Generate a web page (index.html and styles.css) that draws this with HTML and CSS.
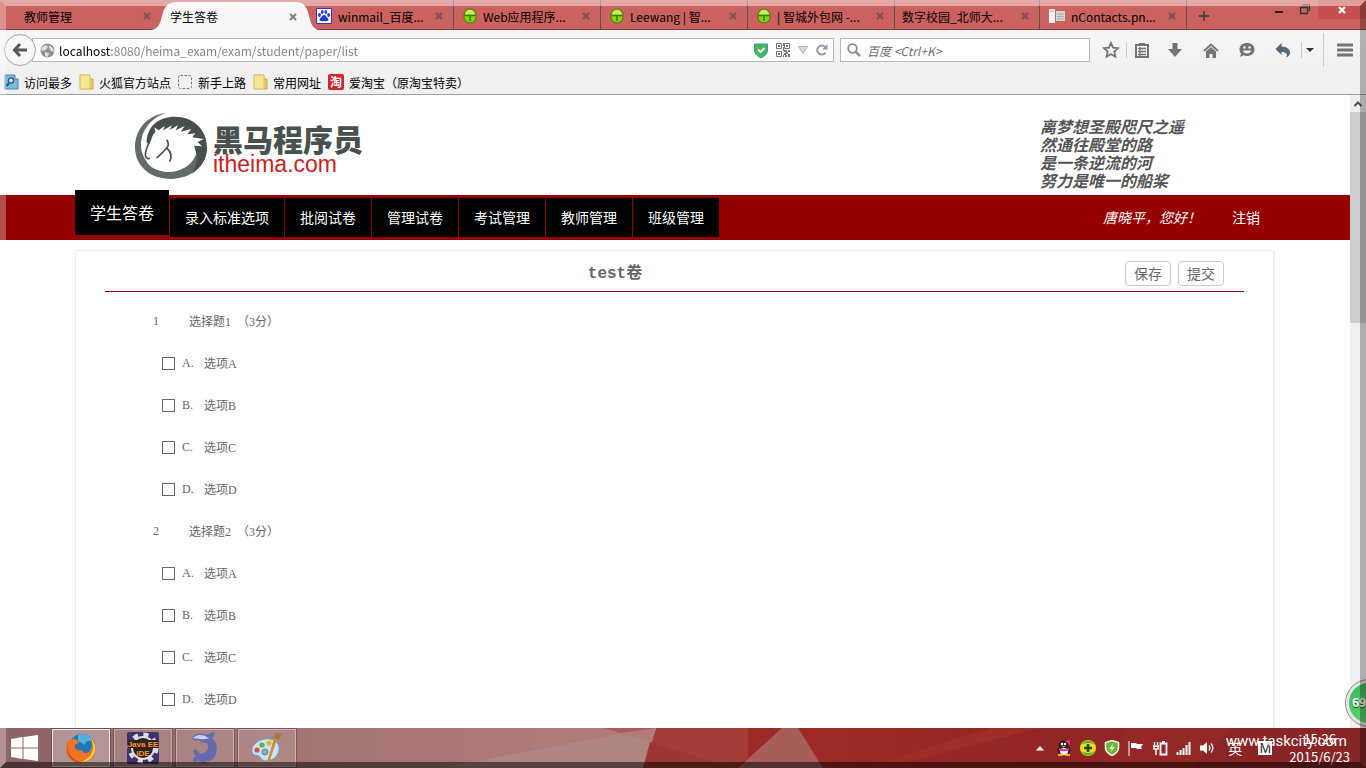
FILE: index.html
```html
<!DOCTYPE html>
<html lang="zh-CN">

<head>
    <meta charset="UTF-8">
    <meta name="viewport" content="width=device-width, initial-scale=1.0">
    <title>学生答卷</title>
    <link rel="stylesheet" href="styles.css">
</head>

<body>
    <!-- shared icons -->
    <svg class="defs" width="0" height="0">
        <symbol id="x" viewBox="0 0 8 8"><path d="M1 1l6 6M7 1L1 7" stroke="currentColor" stroke-width="2.2" /></symbol>
        <symbol id="bean" viewBox="0 0 14 16">
            <rect x="1" y="1" width="12" height="14" rx="6" fill="#86d30a" stroke="#3e7a08" />
            <path d="M2 6.500C3 0 11 0 12 6.500z" fill="#c8f05c" />
            <path d="M1.500 7.500h11M7 8v5" stroke="#3e7a08" stroke-width="1.500" />
        </symbol>
        <symbol id="folder" viewBox="0 0 15 16">
            <path d="M1 1h10v4h3v10H1z" fill="#e6c964" stroke="#cfae45" />
            <path d="M1.500 1.500h9v13h-9z" fill="#f8e694" />
        </symbol>
    </svg>

    <header class="tabs">
        <div class="tab tab-first">
            <span class="tab-title">教师管理</span>
            <button class="close" aria-label="关闭"><svg width="8" height="8"><use href="#x" /></svg></button>
        </div>
        <div class="tab active">
            <svg class="tab-shape" viewBox="0 0 168 30" preserveAspectRatio="none">
                <path d="M0 30C7 29 9 24 11 16C13 7 17 2 25 2H145C153 2 156 7 158 16C160 24 162 29 168 30z" fill="#f6f6f6" />
            </svg>
            <span class="tab-title">学生答卷</span>
            <button class="close" aria-label="关闭"><svg width="8" height="8"><use href="#x" /></svg></button>
        </div>
        <div class="tab after-active">
            <svg width="16" height="16" viewBox="0 0 16 16">
                <path d="M.5.5h15v15H.5z" fill="#fff" stroke="#2a35dc" />
                <path d="M8 7c2 0 2 2 4 3.500c1.500 2-.5 3.500-4 2.500c-3.500 1-5.500-.5-4-2.500C6 9 6 7 8 7z" fill="#2a35dc" />
                <ellipse cx="3.500" cy="7" rx="1.400" ry="1.900" fill="#2a35dc" /><ellipse cx="6.300" cy="4" rx="1.400" ry="2" fill="#2a35dc" />
                <ellipse cx="9.800" cy="4" rx="1.400" ry="2" fill="#2a35dc" /><ellipse cx="12.600" cy="7" rx="1.400" ry="1.900" fill="#2a35dc" />
            </svg>
            <span class="tab-title">winmail_百度...</span>
            <button class="close" aria-label="关闭"><svg width="8" height="8"><use href="#x" /></svg></button>
        </div>
        <div class="tab">
            <svg width="14" height="16"><use href="#bean" /></svg>
            <span class="tab-title">Web应用程序...</span>
            <button class="close" aria-label="关闭"><svg width="8" height="8"><use href="#x" /></svg></button>
        </div>
        <div class="tab">
            <svg width="14" height="16"><use href="#bean" /></svg>
            <span class="tab-title">Leewang | 智...</span>
            <button class="close" aria-label="关闭"><svg width="8" height="8"><use href="#x" /></svg></button>
        </div>
        <div class="tab">
            <svg width="14" height="16"><use href="#bean" /></svg>
            <span class="tab-title">| 智城外包网 -...</span>
            <button class="close" aria-label="关闭"><svg width="8" height="8"><use href="#x" /></svg></button>
        </div>
        <div class="tab no-icon">
            <span class="tab-title">数字校园_北师大...</span>
            <button class="close" aria-label="关闭"><svg width="8" height="8"><use href="#x" /></svg></button>
        </div>
        <div class="tab">
            <svg width="16" height="16" viewBox="0 0 16 16">
                <path d="M0 1h6v14H0z" fill="#f4f4f4" />
                <path d="M7 3h9v10H7z" fill="#d4d4d4" />
                <path d="M1 3h4M8 6h7M8 8.500h7M8 11h7" stroke="#aaa" />
            </svg>
            <span class="tab-title">nContacts.pn...</span>
            <button class="close" aria-label="关闭"><svg width="8" height="8"><use href="#x" /></svg></button>
        </div>
        <button class="new-tab" aria-label="新标签"><svg width="10" height="10" viewBox="0 0 10 10"><path d="M5 0v10M0 5h10" stroke="#444" stroke-width="1.800" /></svg></button>
        <div class="window-buttons">
            <button aria-label="最小化"><svg width="10" height="20" viewBox="0 0 10 20"><path d="M1 12h8" stroke="#222" stroke-width="2" /></svg></button>
            <button aria-label="还原"><svg width="12" height="20" viewBox="0 0 12 20"><path d="M1.500 7.500h7v6h-7zM3.500 5h7v6" fill="none" stroke="#333" stroke-width="1.300" /></svg></button>
            <button class="window-close" aria-label="关闭窗口"><svg width="8" height="8"><use href="#x" /></svg></button>
        </div>
    </header>

    <div class="toolbar">
        <button class="back" aria-label="后退">
            <svg width="16" height="16" viewBox="0 0 16 16"><path d="M8 2L2.500 8L8 14M3 8h12" fill="none" stroke="#555b60" stroke-width="3" /></svg>
        </button>
        <div class="url-bar">
            <svg width="15" height="15" viewBox="0 0 15 15">
                <circle cx="7.500" cy="7.500" r="7" fill="#8f8f8f" />
                <path d="M2 4l4-2 2 2-2 3-3 1-2-1zM9 2l4 3 1 4-3-1-2-3zM5 9l4 1-1 4-3-1z" fill="#ddd" />
            </svg>
            <input class="url" type="text" aria-label="地址" value="localhost:8080/heima_exam/exam/student/paper/list">
            <svg width="14" height="15" viewBox="0 0 14 15">
                <path d="M.5 1h13v6c0 4-3 6-6.500 8C3.500 13 .5 11 .5 7z" fill="#45b854" stroke="#2a9bb0" />
                <path d="M4 6.500l2.500 2.500L10.500 5" fill="none" stroke="#fff" stroke-width="2" />
            </svg>
            <svg width="14" height="14" viewBox="0 0 14 14">
                <path d="M.5.5h5v5h-5zM8.500.5h5v5h-5zM.5 8.500h5v5h-5z" fill="none" stroke="#6f757b" />
                <path d="M2 2h2v2H2zM10 2h2v2h-2zM2 10h2v2H2zM7 0h1v3H7zM7 4h1v4H7zM8 7h3v2H8zM12 7h2v2h-2zM10 9h2v2h-2zM8 10h2v2H8zM12 11h2v3h-2zM7 12h1v2H7zM9 12h2v2H9z" fill="#6f757b" />
            </svg>
            <svg width="10" height="8" viewBox="0 0 10 8"><path d="M.5.5h9L5 7.500z" fill="#d5dae2" stroke="#a9b1bb" /></svg>
            <svg width="12" height="12" viewBox="0 0 12 12"><path d="M9.500 8.500A4.500 4.500 0 1 1 9 3" fill="none" stroke="#8f9aa6" stroke-width="2" /><path d="M11.500 0v5.500H6z" fill="#8f9aa6" /></svg>
        </div>
        <div class="search-bar">
            <svg width="14" height="14" viewBox="0 0 14 14"><circle cx="5.500" cy="5.500" r="4.300" fill="none" stroke="#8c8c8c" stroke-width="1.800" /><path d="M8.500 8.500l4.500 4.500" stroke="#8c8c8c" stroke-width="2.400" /></svg>
            <input class="search" type="text" aria-label="搜索" placeholder="百度 &lt;Ctrl+K&gt;">
        </div>
        <div class="tools">
            <button class="tool" aria-label="收藏"><svg width="18" height="18" viewBox="0 0 18 18"><path d="M9 2l2.100 4.600 4.900.6-3.600 3.400.9 5L9 13.200l-4.300 2.400.9-5L2 7.200l4.900-.6z" fill="none" stroke="#6f757b" stroke-width="1.800" /></svg></button>
            <span class="line"></span>
            <button class="tool" aria-label="书签"><svg width="14" height="16" viewBox="0 0 14 16"><path d="M1 3h12v12H1z" fill="none" stroke="#6f757b" stroke-width="2" /><path d="M4 1h6v3H4z" fill="#6f757b" /><path d="M3 6.500h8M3 9.500h8M3 12.500h8M5 5v9" stroke="#6f757b" stroke-width="1.300" /></svg></button>
            <button class="tool wide" aria-label="下载"><svg width="14" height="14" viewBox="0 0 14 14"><path d="M4.500 0h5v6H14l-7 8-7-8h4.500z" fill="#6f757b" /></svg></button>
            <button class="tool wide" aria-label="主页"><svg width="16" height="15" viewBox="0 0 16 15"><path d="M1 8l7-6.500L15 8" fill="none" stroke="#6f757b" stroke-width="1.800" /><path d="M3 8.500L8 4l5 4.500V15H9.500v-4h-3v4H3z" fill="#6f757b" /></svg></button>
            <button class="tool wide" aria-label="聊天"><svg width="16" height="16" viewBox="0 0 16 16"><path d="M8 1c4.500 0 7.500 2.500 7.500 6.500S12 14 8 14c-1.500 0-2.500-.3-3.500-.8L1 15l1-3.500C1 10.500.5 9 .5 7.500C.5 3.500 3.500 1 8 1z" fill="#6f757b" /><path d="M4 8.500h8c-.5 4-7.500 4-8 0z" fill="#f2f2f2" /><circle cx="5.500" cy="5.500" r="1.200" fill="#f2f2f2" /><circle cx="10.500" cy="5.500" r="1.200" fill="#f2f2f2" /></svg></button>
            <button class="tool wide" aria-label="撤销"><svg width="16" height="16" viewBox="0 0 16 16"><path d="M6.500 1v3.500c6 0 8.500 3 8.500 6.500 0 2-1.500 4-4 4.500 2-3 1-5.500-4.500-5.500V13L.5 7z" fill="#56677a" /></svg></button>
            <span class="line"></span>
            <button class="tool caret" aria-label="更多"><svg width="8" height="4" viewBox="0 0 8 4"><path d="M0 0h8L4 4z" fill="#333" /></svg></button>
            <span class="line tall"></span>
            <button class="tool menu" aria-label="菜单"><svg width="16" height="14" viewBox="0 0 16 14"><path d="M1 2h14M1 7h14M1 12h14" stroke="#6f757b" stroke-width="3" stroke-linecap="round" /></svg></button>
        </div>
    </div>

    <nav class="bookmarks">
        <a href="#"><svg width="15" height="16" viewBox="0 0 15 16"><path d="M1 1h10v4h3v10H1z" fill="#7db9dd" stroke="#4a88b2" /><circle cx="7" cy="6.500" r="2.600" fill="#cfe8f7" stroke="#24577c" stroke-width="1.300" /><path d="M5 9l-2.500 3" stroke="#24577c" stroke-width="2" /></svg>访问最多</a>
        <a href="#"><svg width="15" height="16"><use href="#folder" /></svg>火狐官方站点</a>
        <a href="#"><svg width="15" height="15" viewBox="0 0 15 15"><rect x=".5" y=".5" width="13" height="13" rx="2" fill="none" stroke="#777" stroke-dasharray="2.500 1.500" /></svg>新手上路</a>
        <a href="#"><svg width="15" height="16"><use href="#folder" /></svg>常用网址</a>
        <a href="#"><span class="tao">淘</span>爱淘宝（原淘宝特卖）</a>
    </nav>

    <div class="viewport">
        <div class="page">
            <div class="banner container">
                <div class="logo">
                    <svg width="74" height="68" viewBox="12 12 222 204">
                        <path d="M108 15C48 22 15 68 15 118C15 175 62 213 122 213C180 213 231 175 231 118L203 116C200 160 165 190 115 192C65 192 33 150 33 112C33 68 62 30 108 15z" fill="#636b69" />
                        <path d="M50 105C50 55 85 26 135 26C190 26 231 65 231 118C231 155 212 180 186 197C204 170 204 140 192 118C150 150 90 140 62 110z" fill="#46504c" />
                        <path d="M62 92C66 83 72 78 76 72L73 58L86 67L104 54L100 67L126 52L119 66L144 52L137 67L164 54L152 71L184 63L172 79L196 76L187 88L221 93L203 102L216 115L193 113C201 160 155 193 108 191C72 189 48 170 46 148L60 153L48 142C48 128 59 112 62 92z" fill="#fff" />
                        <path d="M66 78C61 102 45 124 46 142C49 152 54 153 60 151M110 95C122 112 113 120 80 150M109 119C124 132 127 146 119 161" fill="none" stroke="#46504c" stroke-width="5" />
                    </svg>
                    <div class="logo-text">
                        <strong>黑马程序员</strong>
                        <span>itheima.com</span>
                    </div>
                </div>
                <p class="poem">离梦想圣殿咫尺之遥<br>然通往殿堂的路<br>是一条逆流的河<br>努力是唯一的船桨</p>
            </div>

            <div class="nav">
                <div class="container nav-inner">
                    <a class="current" href="#">学生答卷</a>
                    <a href="#">录入标准选项</a>
                    <a href="#">批阅试卷</a>
                    <a href="#">管理试卷</a>
                    <a href="#">考试管理</a>
                    <a href="#">教师管理</a>
                    <a href="#">班级管理</a>
                    <em>唐晓平，您好！</em>
                    <a class="logout" href="#">注销</a>
                </div>
            </div>

            <form class="paper container">
                <div class="paper-head">
                    <h1>test卷</h1>
                    <button type="button">保存</button>
                    <button type="submit">提交</button>
                </div>
                <div class="questions">
                    <div class="question"><span class="num">1</span>选择题1  （3分）</div>
                    <label class="option"><input type="checkbox" name="q1" value="A"><span class="letter">A.</span>选项A</label>
                    <label class="option"><input type="checkbox" name="q1" value="B"><span class="letter">B.</span>选项B</label>
                    <label class="option"><input type="checkbox" name="q1" value="C"><span class="letter">C.</span>选项C</label>
                    <label class="option"><input type="checkbox" name="q1" value="D"><span class="letter">D.</span>选项D</label>
                    <div class="question"><span class="num">2</span>选择题2  （3分）</div>
                    <label class="option"><input type="checkbox" name="q2" value="A"><span class="letter">A.</span>选项A</label>
                    <label class="option"><input type="checkbox" name="q2" value="B"><span class="letter">B.</span>选项B</label>
                    <label class="option"><input type="checkbox" name="q2" value="C"><span class="letter">C.</span>选项C</label>
                    <label class="option"><input type="checkbox" name="q2" value="D"><span class="letter">D.</span>选项D</label>
                </div>
            </form>
        </div>
        <div class="scrollbar">
            <svg width="16" height="17" viewBox="0 0 16 17"><path d="M4.500 11L8 7.500l3.500 3.500" fill="none" stroke="#505050" stroke-width="2" /></svg>
            <div class="thumb"></div>
        </div>
        <div class="speed">69</div>
    </div>

    <footer class="taskbar">
        <svg class="wallpaper" viewBox="0 0 1366 40" preserveAspectRatio="none">
            <defs>
                <linearGradient id="left"><stop offset="0" stop-color="#8e6363" /><stop offset=".5" stop-color="#a57574" /><stop offset="1" stop-color="#b07c79" /></linearGradient>
                <linearGradient id="right"><stop offset="0" stop-color="#a22c26" /><stop offset=".35" stop-color="#952624" /><stop offset="1" stop-color="#862527" /></linearGradient>
            </defs>
            <path d="M0 0h656l-13 40H0z" fill="url(#left)" />
            <path d="M440 40L620 6l30 8-7 26z" fill="#ae8582" />
            <path d="M604 0h52l-36 5z" fill="#ae5b58" />
            <path d="M656 0h92v40H643z" fill="#a33d38" />
            <path d="M650 14l83 26h-90z" fill="#9c3732" />
            <path d="M748 0h618v40H748z" fill="url(#right)" />
            <path d="M774 0h8l-44 40h-4l14-10V0z" fill="#9c2a25" />
            <path d="M782 0h16l25 40h-85z" fill="#a75e5a" />
            <path d="M990 0h50L890 38l-20 2 22-9z" fill="#a02c27" />
            <path d="M1130 0l-30 40h90L1230 0z" fill="#a02c29" opacity=".4" />
        </svg>
        <button class="start" aria-label="开始">
            <svg width="28" height="26" viewBox="0 0 28 26"><path d="M0 4l11.500-2v10.500H0zM12.500 2L27 0v12.500H12.500zM0 13.500h11.500V24L0 22zM12.500 13.500H27V26l-14.500-2z" fill="#fff" /></svg>
        </button>
        <button class="task running" aria-label="Firefox">
            <svg width="32" height="32" viewBox="0 0 32 32">
                <circle cx="17" cy="15" r="13" fill="#1f76b8" /><path d="M13 3c6-2 14 1 15 6-5-1-8 0-8 4l-7-4z" fill="#4fb4e4" />
                <path d="M3 7c0 3 1 3 1 3 2-3 5-4 7-3l3 4-4 2c-1 4 3 6 7 5 1 4 7 4 9-1 2-4 0-9-1-12 5 4 7 12 4 18-3 5-8 8-13 8C7 31 1 25 1 17c0-4 1-7 2-10z" fill="#ec7423" />
                <path d="M25 5c6 6 7 15 1 21-3 3-7 4-10 4 8-3 13-9 12-16-.3-4-1-6-3-9z" fill="#ffd53d" />
                <path d="M2 13c0 9 6 15 13 17-8 1-14-7-13-17z" fill="#cf432b" />
            </svg>
        </button>
        <button class="task" aria-label="Java EE IDE">
            <svg width="32" height="32" viewBox="0 0 32 32">
                <rect width="32" height="32" rx="2" fill="#42306a" />
                <circle cx="16" cy="16" r="13" fill="none" stroke="#ddd" stroke-width="5" stroke-dasharray="5 5.200" />
                <circle cx="16" cy="16" r="11" fill="#29221f" stroke="#ddd" stroke-width="2" />
                <path d="M1 8h30v8H1z" fill="#29221f" />
                <text class="ide" x="16" y="15" text-anchor="middle">Java EE</text>
                <text class="ide" x="16" y="24" text-anchor="middle">IDE</text>
            </svg>
        </button>
        <button class="task" aria-label="Dolphin">
            <svg width="32" height="32" viewBox="0 0 32 32">
                <path d="M3 6C6 1 12 1 17 3l8-3 1 1-3 5c7 6 6 17 0 22-3 2-6 1-8 0 2 1 3 2 3 4-5 0-6-3-8-3-3 0-4 1-6 1 0-4 1-5 3-6-2-2-3-3-2-7 4 1 5 3 6 5 6-1 10-5 7-11-4-1-7 0-6-2l-4-1C6 9 4 8 3 6z" fill="#666bb0" />
                <path d="M4 6c4-4 10-4 16 0-5 2-10 1-16 0z" fill="#ccd0f2" />
            </svg>
        </button>
        <button class="task" aria-label="画图">
            <svg width="32" height="32" viewBox="0 0 32 32">
                <path d="M14 7C6 8 0 14 1 20c1 4 5 3 7 4 3 2 2 5 7 5 8 0 14-7 13-14C27 9 21 6 14 7z" fill="#c8e4f3" stroke="#6ba6c8" />
                <circle cx="6" cy="18" r="2.600" fill="#df4d45" /><circle cx="11" cy="13" r="2.600" fill="#59b548" /><circle cx="18" cy="11" r="2.600" fill="#edb52f" /><circle cx="14" cy="20" r="3" fill="#8eaabd" stroke="#5a88a6" />
                <path d="M26 7l-8 24-2-1 7-24z" fill="#d9892e" /><path d="M22 6l2-5 8 1-5 6z" fill="#a87747" />
            </svg>
        </button>
        <div class="tray">
            <svg width="8" height="5" viewBox="0 0 8 5"><path d="M0 4.500L4 0l4 4.500z" fill="#fff" /></svg>
            <svg width="16" height="16" viewBox="0 0 16 16"><ellipse cx="8" cy="10" rx="6.500" ry="5" fill="#222" /><circle cx="7.500" cy="5" r="4.500" fill="#222" /><ellipse cx="8" cy="11.500" rx="4" ry="3.500" fill="#fff" /><path d="M3 8c3 1.500 7 1.500 10 0v2.500c-3 1-7 1-10 0z" fill="#ee2fa0" /><path d="M9 1l5-1v5z" fill="#ee2fa0" /><circle cx="6" cy="4" r="1.200" fill="#fff" /><circle cx="9" cy="4" r="1.200" fill="#fff" /><path d="M5 6h5l-2.500 1.500zM2 14h5v2H2zM9 14h5v2H9z" fill="#f2a521" /></svg>
            <svg width="16" height="16" viewBox="0 0 16 16"><circle cx="8" cy="8" r="8" fill="#f3da20" /><path d="M1 5C4-1 12-1 15 5 10 2 5 3 1 5zM1 11c4 6 11 6 14 0-5 3-10 2-14 0z" fill="#58b52b" /><path d="M8 4v8M4 8h8" stroke="#17520e" stroke-width="2.500" /></svg>
            <svg width="16" height="16" viewBox="0 0 16 16"><path d="M8 .5l6.500 2v5c0 4-3 6.500-6.500 8-3.500-1.500-6.500-4-6.500-8v-5z" fill="#65b72c" stroke="#f0f0f0" stroke-width="1.600" /><path d="M10 3L5 9h3l-2 4 5-6H8z" fill="#fff" /></svg>
            <svg width="16" height="15" viewBox="0 0 16 15"><path d="M1 0v15" stroke="#fff" /><path d="M3 2h5l1 1h6l-2 3 1 2H9L8 7H3z" fill="#fff" /></svg>
            <svg width="16" height="15" viewBox="0 0 16 15"><path d="M8.500 2.500h6v11h-6zM10 1h3" fill="none" stroke="#fff" stroke-width="1.800" /><path d="M2.500 1v3M5.500 1v3M1 5h6M2 5v3h4V5M4 8v6" fill="none" stroke="#fff" stroke-width="1.400" /></svg>
            <svg width="16" height="13" viewBox="0 0 16 13"><path d="M1.500 10v3M4.500 8v5M7.500 6v7M10.500 3v10M13.500 0v13" stroke="#fff" stroke-width="2" /></svg>
            <svg width="16" height="14" viewBox="0 0 16 14"><path d="M0 4.500h3L7 1v12L3 9.500H0z" fill="#fff" /><path d="M9 4.500c1 1.500 1 3.500 0 5M11 2.500c2.500 3 2.500 6 0 9" fill="none" stroke="#fff" stroke-width="1.300" /></svg>
            <span class="ime">英</span>
            <span class="ime-m">M</span>
            <div class="clock"><span>15:26</span><span>2015/6/23</span></div>
        </div>
        <div class="watermark">www.taskcity.com</div>
    </footer>

    <div class="frame"></div>
</body>

</html>
```

FILE: styles.css
```css
* {
    box-sizing: border-box;
}

body {
    margin: 0;
    height: 100vh;
    display: flex;
    flex-direction: column;
    overflow: hidden;
    background: #fff;
    color: #000;
    font-family: "Noto Sans CJK SC", "Noto Sans", sans-serif;
    font-size: 12px;
}

a {
    color: inherit;
    text-decoration: none;
}

button {
    padding: 0;
    border: none;
    background: none;
    font-family: inherit;
    cursor: pointer;
}

svg {
    display: block;
    flex: none;
}

.defs {
    position: absolute;
}

/* tab strip */
.tabs {
    display: flex;
    flex: none;
    height: 30px;
    background: #cc625f;
    border-bottom: 1px solid #874042;
}

.tab {
    display: flex;
    align-items: center;
    width: 147px;
    height: 29px;
    padding: 3px 10px 0 9px;
    border-right: 1px solid #5d4f5c;
    white-space: nowrap;
}

.tab svg + .tab-title {
    margin-left: 6px;
}

.tab-title {
    flex: 1;
}

.tab .close {
    color: #82505a;
}

.tab-first {
    width: 151px;
    padding-left: 24px;
    padding-right: 0;
    border: none;
}

.tab.active {
    position: relative;
    width: 168px;
    height: 30px;
    padding-left: 19px;
    padding-right: 22px;
    border: none;
}

.tab.active .tab-title {
    margin-left: 0;
}

.tab.active .tab-title,
.tab.active .close {
    position: relative;
}

.tab.active .close {
    color: #7b8590;
}

.tab-shape {
    position: absolute;
    left: 0;
    top: 0;
    width: 100%;
    height: 100%;
}

.tab.after-active {
    margin-left: -12px;
}

.tab.no-icon {
    width: 145px;
    padding-left: 7px;
}

.new-tab {
    width: 34px;
    padding: 3px 12px 0;
}

.window-buttons {
    display: flex;
    align-items: flex-start;
    margin-left: auto;
}

.window-buttons button {
    width: 26px;
    display: flex;
    justify-content: center;
}

.window-buttons .window-close {
    width: 48px;
    height: 19px;
    padding-top: 6px;
    background: #c84f50;
    color: #fff;
}

/* address row */
.toolbar {
    display: flex;
    align-items: center;
    flex: none;
    height: 40px;
    padding-left: 4px;
    background: linear-gradient(#f6f6f6, #f0f0f0);
}

.back {
    z-index: 1;
    display: flex;
    align-items: center;
    justify-content: center;
    width: 32px;
    height: 32px;
    border: 1px solid #a9a9a9;
    border-radius: 50%;
    background: #f6f6f6;
}

.url-bar,
.search-bar {
    display: flex;
    align-items: center;
    height: 24px;
    border: 1px solid #b0bac5;
    background: #fff;
}

.url-bar {
    flex: 1;
    gap: 8px;
    margin-left: -4px;
    padding: 0 5px 0 7px;
}

.url-bar input,
.search-bar input {
    flex: 1;
    min-width: 0;
    padding: 0;
    border: none;
    outline: none;
    font-family: inherit;
    font-size: 12px;
}

.url-bar .url {
    margin-left: -4px;
    color: transparent;
    background: linear-gradient(90deg, #000 53px, #808080 53px);
    -webkit-background-clip: text;
    background-clip: text;
}

.search-bar {
    width: 250px;
    gap: 6px;
    margin-left: 6px;
    padding: 0 6px;
}

.search::placeholder {
    color: #707070;
    font-style: italic;
}

.tools {
    display: flex;
    align-items: center;
    padding-left: 6px;
}

.tool {
    display: flex;
    align-items: center;
    justify-content: center;
    width: 30px;
    height: 30px;
}

.tool.wide {
    width: 36px;
}

.tool.caret {
    width: 16px;
}

.tool.menu {
    width: 42px;
}

.line {
    width: 1px;
    height: 16px;
    background: #c4cad0;
}

.line.tall {
    height: 34px;
    margin-left: 5px;
}

/* bookmarks */
.bookmarks {
    display: flex;
    align-items: center;
    flex: none;
    gap: 7px;
    height: 25px;
    padding-left: 4px;
    background: #f0f0f0;
    border-bottom: 1px solid #a0a0a0;
}

.bookmarks a {
    display: flex;
    align-items: center;
    gap: 5px;
}

.tao {
    width: 16px;
    height: 16px;
    border-radius: 2px;
    background: #d9202e;
    color: #fff;
    font-weight: bold;
    line-height: 15px;
    text-align: center;
}

/* page area */
.viewport {
    position: relative;
    display: flex;
    flex: 1;
    min-height: 0;
    overflow: hidden;
}

.page {
    flex: 1;
    color: #666;
}

.container {
    width: 1200px;
    max-width: 100%;
    margin: 0 auto;
}

.banner {
    display: flex;
    justify-content: space-between;
    height: 100px;
    padding: 17px 91px 0 59px;
}

.logo {
    display: flex;
    gap: 5px;
}

.logo-text {
    padding-top: 10px;
}

.logo-text strong,
.logo-text span {
    display: block;
}

.logo-text strong {
    color: #49514e;
    font-size: 30px;
    font-weight: 900;
    line-height: 32px;
}

.logo-text span {
    color: #c8231f;
    font-family: "Liberation Sans", sans-serif;
    font-size: 23px;
    line-height: 20px;
}

.poem {
    margin: 5px 0 0;
    color: #555;
    font-size: 16px;
    font-style: italic;
    font-weight: bold;
    line-height: 18px;
}

.nav {
    height: 45px;
    background: #960000;
    color: #fff;
}

.nav-inner {
    display: flex;
    align-items: flex-start;
    font-size: 14px;
}

.nav a {
    margin: 3px 1px 0 0;
    padding: 0 15px;
    background: #000;
    line-height: 39px;
}

.nav a.current {
    margin-top: -5px;
    font-size: 16px;
    line-height: 45px;
}

.nav em {
    margin: 3px 16px 0 auto;
    line-height: 39px;
}

.nav a.logout {
    margin-right: 0;
    background: none;
}

.paper {
    margin-top: 10px;
    min-height: 800px;
    padding: 0 29px;
    border: 1px solid #eee;
    border-right-width: 2px;
    font-family: "Liberation Serif", "Noto Sans CJK SC", serif;
}

.paper-head {
    display: flex;
    align-items: center;
    height: 41px;
    padding-right: 20px;
    border-bottom: 1px solid #960000;
}

.paper-head h1 {
    flex: 1;
    margin: 0;
    font-family: "Liberation Mono", "Noto Sans CJK SC", monospace;
    font-size: 16px;
    text-align: center;
}

.paper-head button {
    width: 46px;
    height: 25px;
    margin-top: 4px;
    border: 1px solid #ccc;
    border-radius: 4px;
    background: #fff;
    color: #666;
    font-family: "Noto Sans CJK SC", sans-serif;
    font-size: 14px;
}

.paper-head button + button {
    margin-left: 7px;
}

.questions {
    padding: 8px 0 0 48px;
}

.question,
.option {
    display: flex;
    align-items: center;
    height: 42px;
    white-space: pre;
}

.num {
    width: 36px;
}

.option {
    padding-left: 9px;
}

.option input {
    appearance: none;
    width: 13px;
    height: 13px;
    margin: 0 7px 0 0;
    border: 1px solid #666;
    background: #fff;
}

.option input:checked {
    background: #666;
}

.letter {
    width: 22px;
}

.scrollbar {
    width: 16px;
    background: #f0f0f0;
}

.thumb {
    height: 211px;
    background: #cdcdcd;
}

.speed {
    position: absolute;
    right: -26px;
    bottom: 2px;
    width: 46px;
    height: 46px;
    padding-left: 3px;
    border: 3px solid #e4e4e4;
    border-radius: 50%;
    outline: 1px solid #8b8b8b;
    background: linear-gradient(#3fb65c, #5bd070);
    color: #fff;
    font-weight: bold;
    line-height: 38px;
    text-shadow: 0 1px 1px #185c2a;
}

/* taskbar */
.taskbar {
    position: relative;
    display: flex;
    align-items: center;
    flex: none;
    gap: 4px;
    height: 40px;
    color: #fff;
}

.wallpaper {
    position: absolute;
    width: 100%;
    height: 100%;
}

.start,
.task,
.tray {
    position: relative;
}

.start {
    width: 48px;
    padding-left: 11px;
}

.task {
    display: flex;
    align-items: center;
    justify-content: center;
    width: 58px;
    height: 38px;
    border: 1px solid rgba(255, 255, 255, 0.35);
    outline: 1px solid rgba(60, 30, 30, 0.3);
    background: rgba(255, 255, 255, 0.15);
}

.task.running {
    border-color: #f0e4e4;
    background: rgba(255, 255, 255, 0.3);
}

.ide {
    fill: #ff912b;
    font-family: "Liberation Sans", sans-serif;
    font-size: 8px;
    font-weight: bold;
}

.tray {
    display: flex;
    align-items: center;
    gap: 8px;
    margin-left: auto;
    padding-right: 16px;
}

.tray > svg:first-child {
    margin-right: 4px;
}

.ime {
    margin-left: 4px;
    font-size: 14px;
}

.ime-m {
    width: 14px;
    height: 14px;
    margin: 0 9px 0 8px;
    background: #fff;
    color: #222;
    font-family: "Liberation Sans", sans-serif;
    font-size: 14px;
    line-height: 15px;
    text-align: center;
}

.clock {
    display: flex;
    flex-direction: column;
    align-items: center;
    font-size: 13px;
    line-height: 18px;
}

.watermark {
    position: absolute;
    right: 19px;
    top: 4px;
    font-family: Roboto, sans-serif;
    font-size: 15px;
    line-height: 18px;
}

/* bevel drawn over the whole window */
.frame {
    position: fixed;
    inset: 0;
    z-index: 5;
    border: 6px solid;
    border-color: rgba(255, 255, 255, 0.45) rgba(0, 0, 0, 0.28) rgba(0, 0, 0, 0.5) rgba(255, 255, 255, 0.3);
    pointer-events: none;
}
```
